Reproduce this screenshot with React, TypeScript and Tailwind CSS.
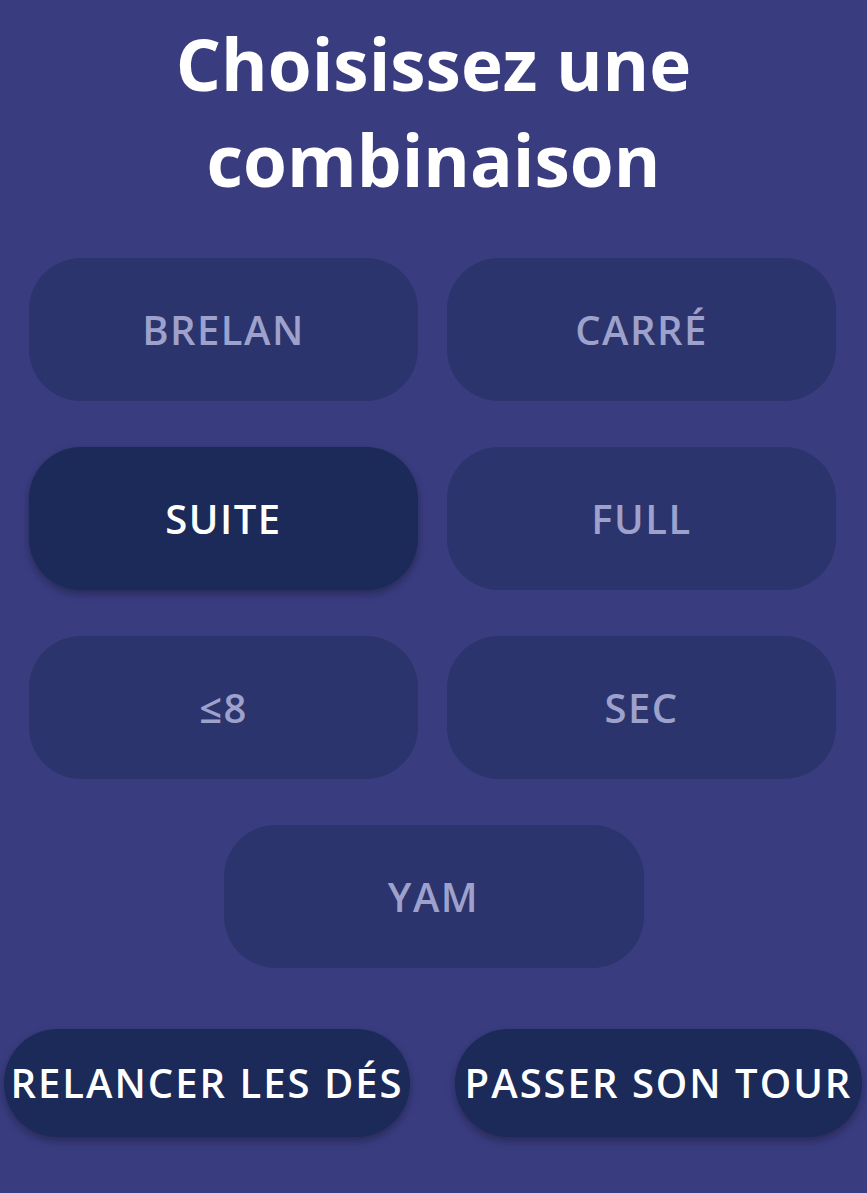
const combos = [
  { label: "BRELAN", active: false },
  { label: "CARRÉ", active: false },
  { label: "SUITE", active: true },
  { label: "FULL", active: false },
  { label: "≤8", active: false },
  { label: "SEC", active: false },
];

const ComboButton = ({ label, active, wide }: { label: string; active: boolean; wide?: boolean }) => (
  <button
    className={`h-[143px] rounded-[52px] flex items-center justify-center text-[40px] font-semibold tracking-[1.5px] ${
      wide ? "w-[420px]" : "w-full"
    } ${active ? "bg-[#1b2a58] text-white shadow-[0_4px_8px_rgba(0,0,0,0.3)]" : "bg-[#2b346c] text-[#9da1cb]"}`}
  >
    {label}
  </button>
);

export default function App() {
  return (
    <div className="min-h-screen w-full bg-[#393c7f] font-['Open_Sans',sans-serif] pb-[56px]">
      <h1 className="pt-[16px] text-center text-[71px] leading-[96px] font-bold text-white">
        Choisissez une
        <br />
        combinaison
      </h1>

      <div className="mt-[50px] pl-[29px] pr-[31px] grid grid-cols-[389px_389px] gap-x-[29px] gap-y-[46px]">
        {combos.map((c) => (
          <ComboButton key={c.label} label={c.label} active={c.active} />
        ))}
      </div>

      <div className="mt-[46px] flex justify-center">
        <ComboButton label="YAM" active={false} wide />
      </div>

      <div className="mt-[61px] pl-[4px] pr-[5px] flex justify-between">
        <button className="w-[406px] h-[108px] rounded-[54px] bg-[#1b2a58] text-white text-[40px] font-semibold tracking-[2px] whitespace-nowrap flex items-center justify-center shadow-[0_4px_8px_rgba(0,0,0,0.3)]">
          RELANCER LES DÉS
        </button>
        <button className="w-[407px] h-[108px] rounded-[54px] bg-[#1b2a58] text-white text-[40px] font-semibold tracking-[2px] whitespace-nowrap flex items-center justify-center shadow-[0_4px_8px_rgba(0,0,0,0.3)]">
          PASSER SON TOUR
        </button>
      </div>
    </div>
  );
}
